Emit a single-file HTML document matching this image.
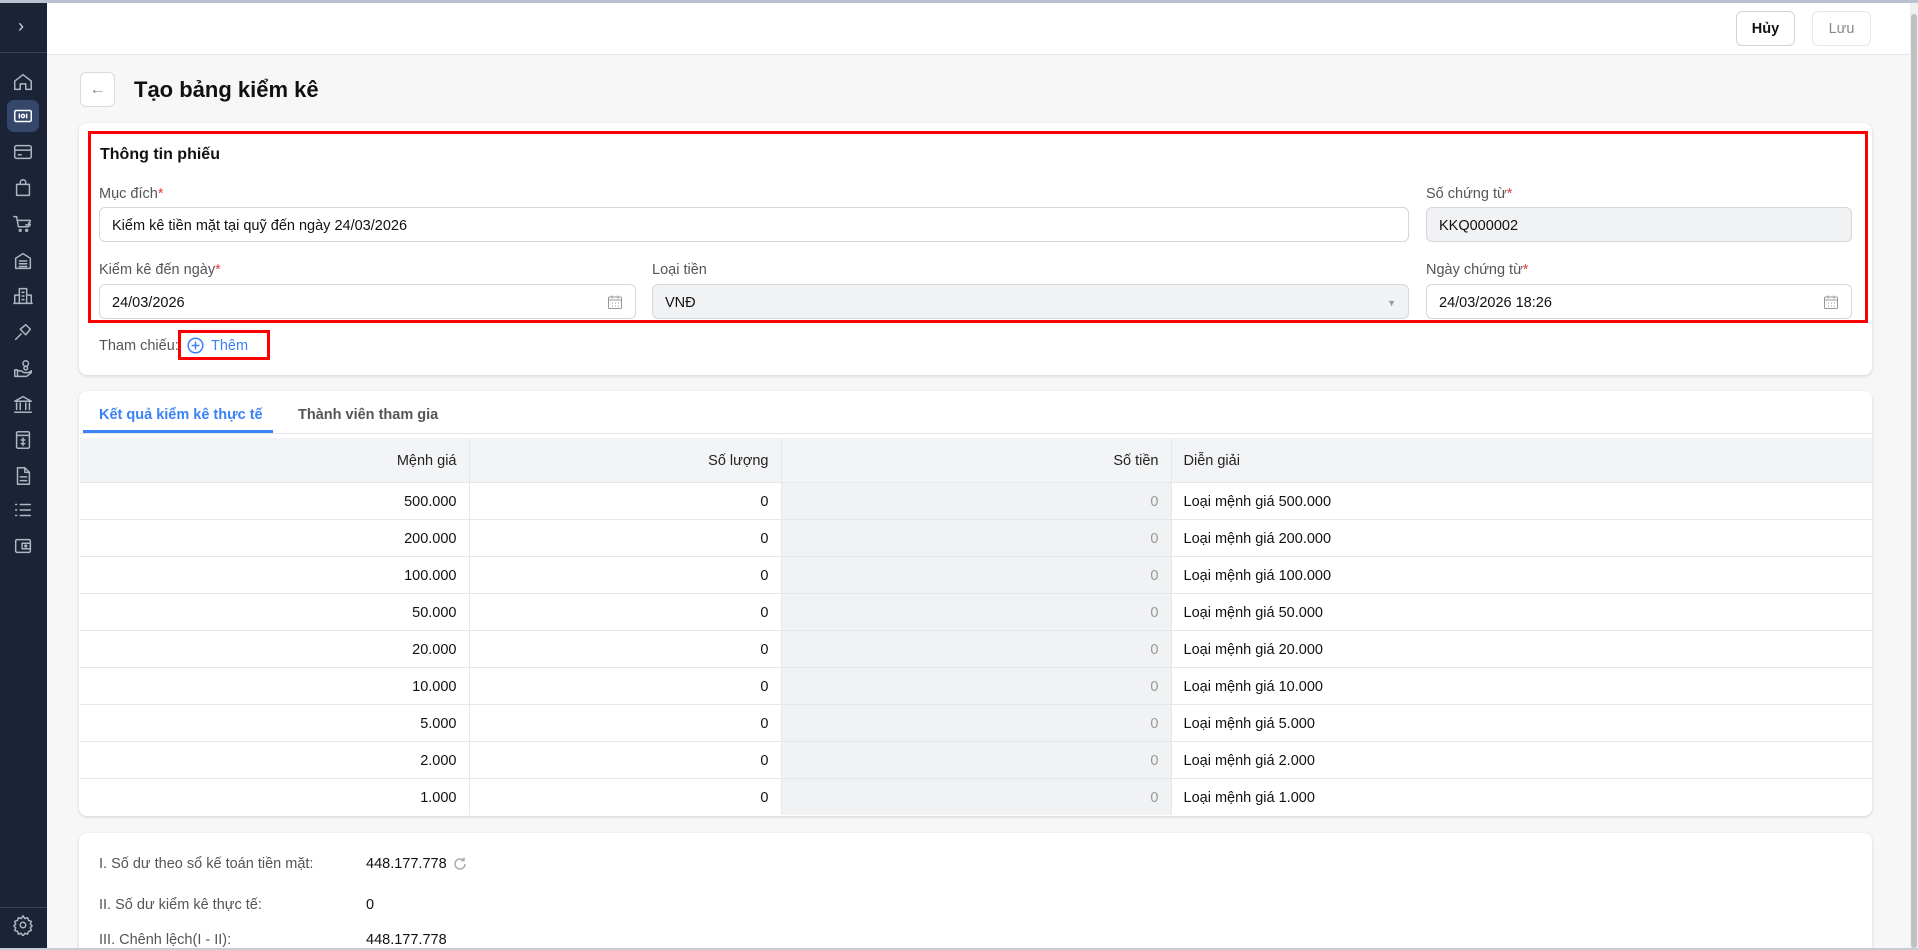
<!DOCTYPE html>
<html><head><meta charset="utf-8"><style>
*{box-sizing:border-box;margin:0;padding:0}
html,body{width:1918px;height:950px;overflow:hidden}
body{background:#f7f7f8;font-family:"Liberation Sans","Noto Sans CJK SC",sans-serif;color:#111;font-size:14.5px;position:relative}
.a{position:absolute}
#topline{left:0;top:0;width:1918px;height:3px;background:#b8c2d0}
#side{left:0;top:3px;width:47px;height:947px;background:#1b2437}
#top{left:47px;top:3px;width:1863px;height:52px;background:#fff;border-bottom:1px solid #e5e7eb}
.ic{position:absolute;left:12px;width:22px;height:22px}
.ic svg{width:22px;height:22px;fill:none;stroke:#aeb6c3;stroke-width:1.6;stroke-linecap:round;stroke-linejoin:round}
.btn{position:absolute;top:11px;height:35px;border:1px solid #d1d5db;border-radius:6px;background:#fff;font-size:14.5px;text-align:center;line-height:35px}
.card{position:absolute;background:#fff;border-radius:8px;box-shadow:0 1px 3px rgba(0,0,0,.15)}
.lbl{position:absolute;font-size:14.5px;color:#555}
.lbl b{color:#e53e3e;font-weight:normal}
.inp{position:absolute;height:35px;border:1px solid #d4d7dc;border-radius:6px;background:#fff;padding-left:12px;line-height:36px;font-size:14.5px;color:#111}
.gray{background:#f1f2f4}
.red{position:absolute;border:3px solid #f00}
table{border-collapse:collapse;position:absolute;left:80px;top:438px;width:1792px;font-size:14.5px}
td,th{height:37px;border-bottom:1px solid #e5e7eb;border-right:1px solid #e5e7eb;padding:2px 12px 0}
th{height:44px;background:#f3f4f6;font-weight:normal;color:#222}
td.r,th.r{text-align:right}
td.g{background:#f1f2f4;color:#999}
td:last-child,th:last-child{border-right:none;text-align:left}
tr:last-child td{border-bottom:none}
.cal{position:absolute;top:9px;width:16px;height:16px}
</style></head><body>
<div class="a" id="topline"></div>
<div class="a" id="side">
<div class="a" style="left:18px;top:13px;color:#cbd5e1;font-size:18px">&#x203A;</div>
<div class="a" style="left:0;top:49px;width:47px;height:1px;background:#38425a"></div>
<div class="a" style="left:7px;top:97px;width:32px;height:32px;background:#34476a;border-radius:7px"></div>
<div class="ic" style="top:68px"><svg viewBox="0 0 24 24"><path d="M3 11l9-7 9 7v9H15v-6H9v6H3z"/></svg></div>
<div class="ic" style="top:102px"><svg viewBox="0 0 24 24" style="stroke:#fff"><rect x="3" y="6" width="18" height="12" rx="1.5"/><path d="M8 10v4M16 10v4"/><circle cx="12" cy="12" r="1.8"/></svg></div>
<div class="ic" style="top:138px"><svg viewBox="0 0 24 24"><rect x="3" y="5" width="18" height="14" rx="2"/><path d="M3 10h18M7 15h3"/></svg></div>
<div class="ic" style="top:174px"><svg viewBox="0 0 24 24"><path d="M5 8h14v12H5zM9 8V6a3 3 0 016 0v2"/></svg></div>
<div class="ic" style="top:210px"><svg viewBox="0 0 24 24"><path d="M2 4h3l2 11h10M7 8h13l-1 4M15 13h5m-2-2l2 2-2 2"/><circle cx="9" cy="19" r="1"/><circle cx="16" cy="19" r="1"/></svg></div>
<div class="ic" style="top:247px"><svg viewBox="0 0 24 24"><path d="M4 20V9l8-5 8 5v11zM8 12h8M8 15h8M8 18h8"/></svg></div>
<div class="ic" style="top:282px"><svg viewBox="0 0 24 24"><path d="M8 20V4h8v16M3 20V11h5M16 11h5v9M2 20h20M11 8h2M11 12h2M11 16h2"/></svg></div>
<div class="ic" style="top:318px"><svg viewBox="0 0 24 24"><path d="M4 20l6-6M9 9l6-5 5 5-5 6z"/></svg></div>
<div class="ic" style="top:355px"><svg viewBox="0 0 24 24"><circle cx="15" cy="6" r="3"/><circle cx="15" cy="11" r="2"/><path d="M3 13h3v7H3zM6 14h4l3 2h5l3-2v2l-5 4H6"/></svg></div>
<div class="ic" style="top:390px"><svg viewBox="0 0 24 24"><path d="M3 9l9-5 9 5zM5 11v7M9 11v7M15 11v7M19 11v7M3 21h18"/></svg></div>
<div class="ic" style="top:426px"><svg viewBox="0 0 24 24"><rect x="5" y="3" width="14" height="18" rx="1.5"/><path d="M5 7h14M12 10v8M10 12h4M10 16h4"/></svg></div>
<div class="ic" style="top:462px"><svg viewBox="0 0 24 24"><path d="M6 3h8l5 5v13H6zM14 3v5h5M9 13h7M9 17h7"/></svg></div>
<div class="ic" style="top:496px"><svg viewBox="0 0 24 24"><path d="M9 6h11M9 12h11M9 18h11M4 6h1M4 12h1M4 18h1"/></svg></div>
<div class="ic" style="top:532px"><svg viewBox="0 0 24 24"><rect x="4" y="5" width="16" height="14" rx="1.5"/><rect x="11" y="9" width="9" height="6"/><circle cx="15" cy="12" r="1"/></svg></div>
<div class="a" style="left:0;top:904px;width:47px;height:1px;background:#38425a"></div>
<div class="ic" style="top:911px"><svg viewBox="0 0 24 24"><circle cx="12" cy="12" r="3"/><path d="M12 2l2 3 3-1 1 3 3 1-1 3 2 2-2 2 1 3-3 1-1 3-3-1-2 3-2-3-3 1-1-3-3-1 1-3-2-2 2-2-1-3 3-1 1-3 3 1z"/></svg></div>
</div>
<div class="a" id="top"></div>
<div class="btn" style="left:1736px;width:59px;font-weight:bold;color:#111">Hủy</div>
<div class="btn" style="left:1812px;width:59px;color:#888;border-color:#e5e7eb">Lưu</div>
<div class="a" style="left:1910px;top:3px;width:8px;height:947px;background:#f0f0f0"></div>
<div class="a" style="left:1911px;top:14px;width:6px;height:934px;background:#c1c1c1;border-radius:3px"></div>

<div class="a" style="left:80px;top:72px;width:35px;height:35px;border:1px solid #d8dbe0;border-radius:6px;background:#fff;text-align:center;line-height:33px;color:#888;font-size:16px">&#x2190;</div>
<div class="a" style="left:134px;top:77px;font-size:22px;font-weight:bold;color:#111">Tạo bảng kiểm kê</div>

<div class="card" style="left:79px;top:123px;width:1793px;height:252px"></div>
<div class="red" style="left:88px;top:131px;width:1780px;height:192px"></div>
<div class="a" style="left:100px;top:146px;font-size:16px;font-weight:bold">Thông tin phiếu</div>
<div class="lbl" style="left:99px;top:186px">Mục đích<b>*</b></div>
<div class="inp" style="left:99px;top:207px;width:1310px">Kiểm kê tiền mặt tại quỹ đến ngày 24/03/2026</div>
<div class="lbl" style="left:1426px;top:186px">Số chứng từ<b>*</b></div>
<div class="inp gray" style="left:1426px;top:207px;width:426px">KKQ000002</div>
<div class="lbl" style="left:99px;top:262px">Kiểm kê đến ngày<b>*</b></div>
<div class="inp" style="left:99px;top:284px;width:537px">24/03/2026<svg class="cal" style="left:507px" viewBox="0 0 16 16" fill="none" stroke="#999"><rect x="1.5" y="3" width="13" height="11.5" rx="1"/><path d="M1.5 6h13M5 1.5v3M11 1.5v3M5 9h1M8 9h1M11 9h1M5 12h1M8 12h1M11 12h1"/></svg></div>
<div class="lbl" style="left:652px;top:262px">Loại tiền</div>
<div class="inp gray" style="left:652px;top:284px;width:757px">VNĐ<span class="a" style="right:12px;top:0;color:#999;font-size:9px">&#9660;</span></div>
<div class="lbl" style="left:1426px;top:262px">Ngày chứng từ<b>*</b></div>
<div class="inp" style="left:1426px;top:284px;width:426px">24/03/2026 18:26<svg class="cal" style="left:396px" viewBox="0 0 16 16" fill="none" stroke="#999"><rect x="1.5" y="3" width="13" height="11.5" rx="1"/><path d="M1.5 6h13M5 1.5v3M11 1.5v3M5 9h1M8 9h1M11 9h1M5 12h1M8 12h1M11 12h1"/></svg></div>
<div class="lbl" style="left:99px;top:338px">Tham chiếu:</div>
<div class="red" style="left:178px;top:330px;width:92px;height:30px"></div>
<svg class="a" style="left:187px;top:337px" width="17" height="17" viewBox="0 0 17 17" fill="none" stroke="#3b82f6" stroke-width="1.5"><circle cx="8.5" cy="8.5" r="7.3"/><path d="M8.5 4.5v8M4.5 8.5h8"/></svg>
<div class="a" style="left:211px;top:338px;color:#3b82f6;font-size:14.5px">Thêm</div>

<div class="card" style="left:79px;top:391px;width:1793px;height:425px;overflow:hidden"></div>
<div class="a" style="left:99px;top:407px;color:#3b82f6;font-size:14.5px;font-weight:bold">Kết quả kiểm kê thực tế</div>
<div class="a" style="left:298px;top:407px;color:#555;font-size:14.5px;font-weight:bold">Thành viên tham gia</div>
<div class="a" style="left:83px;top:430px;width:190px;height:3px;background:#3b82f6"></div>
<div class="a" style="left:80px;top:433px;width:1792px;height:1px;background:#e5e7eb"></div>
<table>
<tr><th class="r" style="width:389px">Mệnh giá</th><th class="r" style="width:312px">Số lượng</th><th class="r" style="width:390px">Số tiền</th><th>Diễn giải</th></tr>
<tr><td class="r">500.000</td><td class="r">0</td><td class="r g">0</td><td>Loại mệnh giá 500.000</td></tr>
<tr><td class="r">200.000</td><td class="r">0</td><td class="r g">0</td><td>Loại mệnh giá 200.000</td></tr>
<tr><td class="r">100.000</td><td class="r">0</td><td class="r g">0</td><td>Loại mệnh giá 100.000</td></tr>
<tr><td class="r">50.000</td><td class="r">0</td><td class="r g">0</td><td>Loại mệnh giá 50.000</td></tr>
<tr><td class="r">20.000</td><td class="r">0</td><td class="r g">0</td><td>Loại mệnh giá 20.000</td></tr>
<tr><td class="r">10.000</td><td class="r">0</td><td class="r g">0</td><td>Loại mệnh giá 10.000</td></tr>
<tr><td class="r">5.000</td><td class="r">0</td><td class="r g">0</td><td>Loại mệnh giá 5.000</td></tr>
<tr><td class="r">2.000</td><td class="r">0</td><td class="r g">0</td><td>Loại mệnh giá 2.000</td></tr>
<tr><td class="r">1.000</td><td class="r">0</td><td class="r g">0</td><td>Loại mệnh giá 1.000</td></tr>
</table>

<div class="card" style="left:79px;top:833px;width:1793px;height:117px;border-bottom-left-radius:0;border-bottom-right-radius:0"></div>
<div class="lbl" style="left:99px;top:856px">I. Số dư theo sổ kế toán tiền mặt:</div>
<div class="a" style="left:366px;top:856px">448.177.778</div>
<svg class="a" style="left:452px;top:856px" width="16" height="16" viewBox="0 0 16 16" fill="none" stroke="#aaa" stroke-width="1.5"><path d="M13 8a5 5 0 11-1.5-3.6M12 1.5v3h-3"/></svg>
<div class="lbl" style="left:99px;top:897px">II. Số dư kiểm kê thực tế:</div>
<div class="a" style="left:366px;top:897px">0</div>
<div class="lbl" style="left:99px;top:932px">III. Chênh lệch(I - II):</div>
<div class="a" style="left:366px;top:932px">448.177.778</div>
<div class="a" style="left:0;top:948px;width:1918px;height:2px;background:#c8ccd2"></div>
</body></html>
